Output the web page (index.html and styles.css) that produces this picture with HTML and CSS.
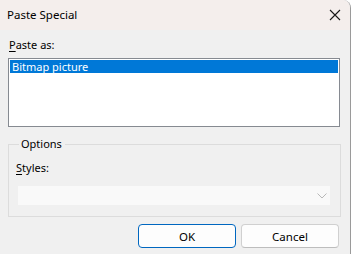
FILE: index.html
```html
<!DOCTYPE html>
<html>
<head>
<meta charset="utf-8">
<link rel="stylesheet" href="styles.css">
</head>
<body>
<div class="window">
  <div class="titlebar">
    <span class="title">Paste Special</span>
    <svg class="close" width="12" height="12" viewBox="0 0 12 12"><path d="M1 1L11 11M11 1L1 11" stroke="#1a1a1a" stroke-width="1.1" fill="none"/></svg>
  </div>
  <div class="content">
    <div class="label"><u>P</u>aste as:</div>
    <div class="listbox">
      <div class="item selected">Bitmap picture</div>
    </div>
    <div class="group">
      <div class="legend">Options</div>
      <div class="label styles"><u>S</u>tyles:</div>
      <div class="combo">
        <svg class="chev" width="10" height="6" viewBox="0 0 10 6"><path d="M0.5 0.5L5 5L9.5 0.5" stroke="#b8b8b8" stroke-width="1" fill="none"/></svg>
      </div>
    </div>
    <div class="buttons">
      <button class="btn default">OK</button>
      <button class="btn">Cancel</button>
    </div>
  </div>
</div>
</body>
</html>
```

FILE: styles.css
```css
html, body {
  margin: 0;
  padding: 0;
  background: #ffffff;
}
body {
  font-family: "Noto Sans", "Open Sans", sans-serif;
  font-size: 11px;
  color: #000;
}
.window {
  width: 350px;
  height: 254px;
  background: #f0f0f0;
  border-right: 1px solid #9a9a9a;
  border-top-right-radius: 8px;
  overflow: hidden;
}
.titlebar {
  height: 30px;
  background: #f4eeec;
  display: flex;
  align-items: center;
  justify-content: space-between;
  padding: 0 9px 0 7px;
}
.title {
  line-height: 16px;
  font-size: 11.5px;
}
.close {
  display: block;
}
.content {
  padding: 7px 0 0 8px;
}
.label {
  line-height: 16px;
  height: 16px;
  padding-left: 1px;
}
.label u {
  text-underline-offset: 2px;
}
.listbox {
  margin-top: 5px;
  width: 328px;
  height: 65px;
  border: 1px solid #868a91;
  background: #fff;
  padding: 1px;
}
.item {
  height: 13px;
  line-height: 13px;
  padding-left: 2px;
}
.selected {
  background: #0078d7;
  color: #fff;
}
.group {
  margin-top: 17px;
  width: 333px;
  height: 73px;
  border: 1px solid #dcdcdc;
  box-sizing: border-box;
  padding: 0 0 0 7px;
}
.legend {
  margin-top: -8px;
  margin-left: 3px;
  width: fit-content;
  padding: 0 3px 0 2px;
  line-height: 14px;
  background: #f0f0f0;
}
.styles {
  margin-top: 9px;
  padding-left: 0;
}
.combo {
  margin-top: 10px;
  margin-left: 2px;
  width: 312px;
  height: 19px;
  background: #f9f9f9;
  display: flex;
  align-items: center;
  justify-content: flex-end;
  padding-right: 3px;
  box-sizing: border-box;
}
.buttons {
  display: flex;
  justify-content: flex-end;
  gap: 5px;
  width: 331px;
  margin-top: 7px;
}
.btn {
  width: 98px;
  height: 24px;
  font-family: inherit;
  font-size: 11.5px;
  color: #000;
  background: #fdfdfd;
  border: 1px solid #d0d0d0;
  border-bottom-color: #bdbdbd;
  border-radius: 4px;
  padding: 0;
}
.btn.default {
  border: 1px solid #0067c0;
}
```
